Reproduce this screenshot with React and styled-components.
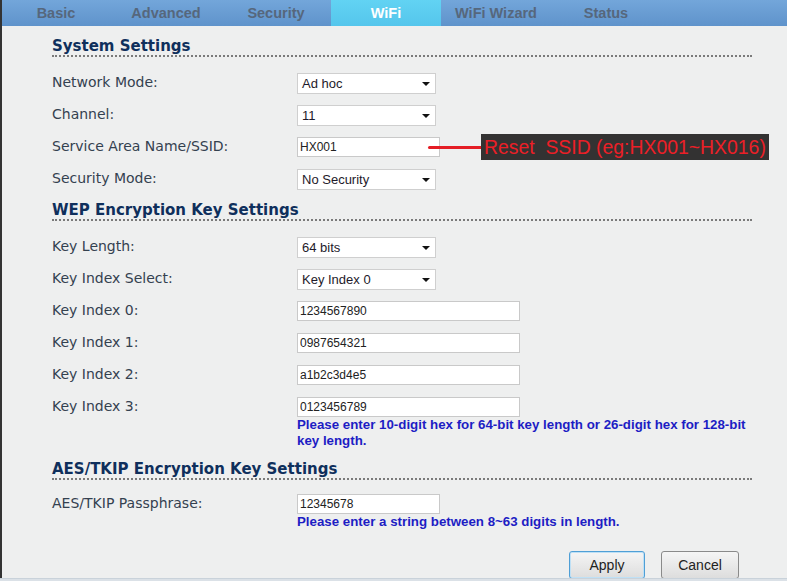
import React from "react";
import styled, { createGlobalStyle } from "styled-components";

const GlobalStyle = createGlobalStyle`
  html, body {
    margin: 0;
    padding: 0;
    background: #eeefef;
  }
  body {
    font-family: "DejaVu Sans", Verdana, sans-serif;
  }
`;

const tabs = ["Basic", "Advanced", "Security", "WiFi", "WiFi Wizard", "Status"];

const Page = () => {
  return (
    <>
      <GlobalStyle />
      <Frame>
        <TabBar>
          {tabs.map((t) => (
            <Tab key={t} active={t === "WiFi"}>
              {t}
            </Tab>
          ))}
        </TabBar>

        <Content>
          <Heading first>System Settings</Heading>
          <Row>
            <Label>Network Mode:</Label>
            <Field>
              <Select value="Ad hoc" />
            </Field>
          </Row>
          <Row>
            <Label>Channel:</Label>
            <Field>
              <Select value="11" />
            </Field>
          </Row>
          <Row>
            <Label>Service Area Name/SSID:</Label>
            <Field>
              <Input width={143} defaultValue="HX001" />
              <Pointer />
              <Callout>
                Reset&nbsp;&nbsp;SSID (eg:HX001~HX016)
              </Callout>
            </Field>
          </Row>
          <Row>
            <Label>Security Mode:</Label>
            <Field>
              <Select value="No Security" />
            </Field>
          </Row>

          <Heading>WEP Encryption Key Settings</Heading>
          <Row>
            <Label>Key Length:</Label>
            <Field>
              <Select value="64 bits" />
            </Field>
          </Row>
          <Row>
            <Label>Key Index Select:</Label>
            <Field>
              <Select value="Key Index 0" />
            </Field>
          </Row>
          <Row>
            <Label>Key Index 0:</Label>
            <Field>
              <Input width={223} defaultValue="1234567890" />
            </Field>
          </Row>
          <Row>
            <Label>Key Index 1:</Label>
            <Field>
              <Input width={223} defaultValue="0987654321" />
            </Field>
          </Row>
          <Row>
            <Label>Key Index 2:</Label>
            <Field>
              <Input width={223} defaultValue="a1b2c3d4e5" />
            </Field>
          </Row>
          <Row>
            <Label>Key Index 3:</Label>
            <Field>
              <Input width={223} defaultValue="0123456789" />
              <Hint>
                Please enter 10-digit hex for 64-bit key length or 26-digit hex
                for 128-bit key length.
              </Hint>
            </Field>
          </Row>

          <Heading tight>AES/TKIP Encryption Key Settings</Heading>
          <Row>
            <Label>AES/TKIP Passphrase:</Label>
            <Field>
              <Input width={143} defaultValue="12345678" />
              <Hint>Please enter a string between 8~63 digits in length.</Hint>
            </Field>
          </Row>

          <Buttons>
            <Button focused>Apply</Button>
            <Button>Cancel</Button>
          </Buttons>
        </Content>
      </Frame>
      <Footer />
    </>
  );
};

const Select = ({ value }) => (
  <SelectBox>
    <span>{value}</span>
    <Caret />
  </SelectBox>
);

export default function App() {
  return <Page />;
}

const Frame = styled.div`
  border-left: 2px solid #333;
  height: 578px;
  box-sizing: border-box;
  overflow: hidden;
`;

const TabBar = styled.div`
  display: flex;
  height: 26px;
  background: linear-gradient(#73a6da, #5f93cb);
  margin-left: -1px;
`;

const Tab = styled.div`
  width: 110px;
  display: flex;
  align-items: center;
  justify-content: center;
  font-family: "Liberation Sans", Arial, sans-serif;
  font-weight: bold;
  font-size: 14.5px;
  color: ${(p) => (p.active ? "#fff" : "#56677c")};
  background: ${(p) => (p.active ? "linear-gradient(#62d3f3, #55c6ec)" : "transparent")};
`;

const Content = styled.div`
  width: 700px;
  padding-left: 50px;
`;

const Heading = styled.div`
  margin-top: ${(p) => (p.first ? "5px" : "0")};
  margin-bottom: ${(p) => (p.tight ? "8px" : "10px")};
  padding-top: 6px;
  line-height: 18px;
  font-size: 15px;
  font-weight: bold;
  color: #0f2f5c;
  border-bottom: 2px dotted #7a7a7a;
`;

const Row = styled.div`
  display: grid;
  grid-template-columns: 245px 1fr;
  min-height: 32px;
`;

const Label = styled.div`
  line-height: 30px;
  font-size: 14px;
  color: #34414f;
`;

const Field = styled.div`
  position: relative;
  padding-top: 6px;
`;

const Input = styled.input`
  display: block;
  box-sizing: border-box;
  width: ${(p) => p.width}px;
  height: 20px;
  margin: 0;
  padding: 0 2px;
  border: 1px solid #c9c9c9;
  background: #fff;
  font-family: "Liberation Sans", Arial, sans-serif;
  font-size: 12px;
  color: #222;
  outline: none;
`;

const SelectBox = styled.div`
  box-sizing: border-box;
  width: 139px;
  height: 21px;
  padding: 0 4px;
  display: flex;
  align-items: center;
  justify-content: space-between;
  border: 1px solid #cfcfcf;
  background: #fff;
  font-family: "Liberation Sans", Arial, sans-serif;
  font-size: 13px;
  color: #1e1a2a;
`;

const Caret = styled.span`
  width: 0;
  height: 0;
  margin-right: 1px;
  border-left: 4px solid transparent;
  border-right: 4px solid transparent;
  border-top: 4px solid #111;
`;

const Pointer = styled.span`
  position: absolute;
  left: 131px;
  top: 15px;
  width: 55px;
  height: 3px;
  border-radius: 2px;
  background: #e41d25;
`;

const Callout = styled.div`
  position: absolute;
  left: 184px;
  top: 3px;
  height: 26px;
  padding: 0 3px;
  display: flex;
  align-items: center;
  background: #333232;
  color: #ec1f27;
  font-family: "Liberation Sans", Arial, sans-serif;
  font-size: 19.4px;
  white-space: nowrap;
`;

const Hint = styled.div`
  max-width: 455px;
  font-family: "Liberation Sans", Arial, sans-serif;
  font-weight: bold;
  font-size: 13.3px;
  line-height: 16px;
  color: #1d1dc4;
  margin-bottom: 5px;
`;

const Buttons = styled.div`
  display: flex;
  justify-content: flex-end;
  gap: 16px;
  padding-right: 13px;
  margin-top: 16px;
`;

const Button = styled.button`
  width: ${(p) => (p.focused ? "76px" : "78px")};
  height: 28px;
  border-radius: 3px;
  border: 1px solid ${(p) => (p.focused ? "#4f9fd6" : "#8a8a8a")};
  box-shadow: ${(p) => (p.focused ? "inset 0 0 0 1px #bfe0f5" : "none")};
  background: linear-gradient(#f5f5f5, #dddddd);
  font-family: "Liberation Sans", Arial, sans-serif;
  font-size: 14px;
  color: #222;
`;

const Footer = styled.div`
  height: 3px;
  background: #dbe1e7;
  border-top: 1px solid #c9d2da;
`;
